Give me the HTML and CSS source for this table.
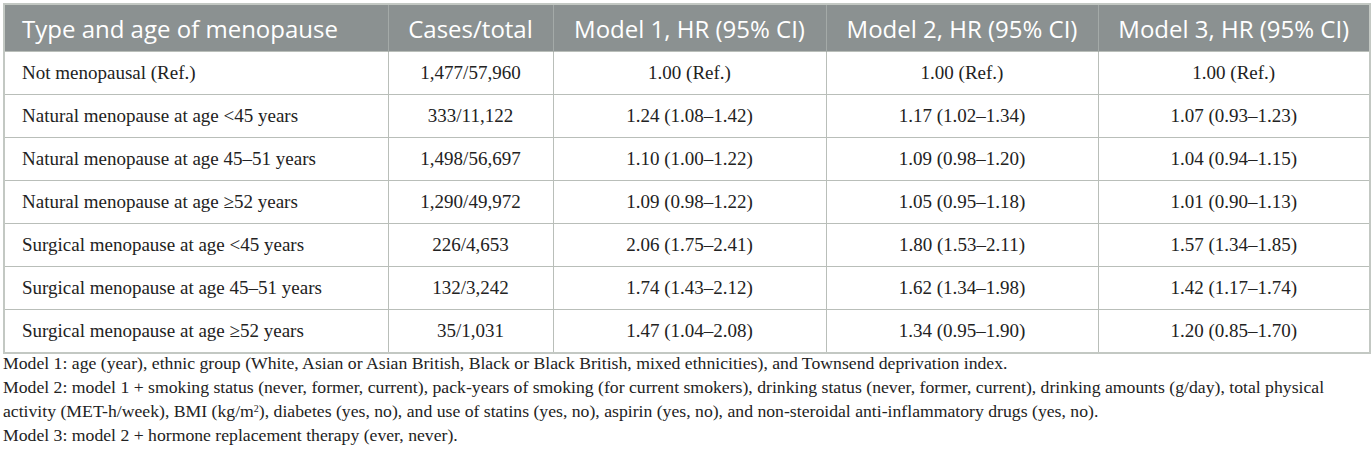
FILE: index.html
```html
<!DOCTYPE html>
<html lang="en">
<head>
  <meta charset="UTF-8" />
  <title>Menopause and risk table</title>
  <link rel="stylesheet" href="styles.css">
</head>
<body>

  <div class="wrap">
    <table class="results">
      <colgroup>
        <col class="c-type">
        <col class="c-cases">
        <col class="c-model1">
        <col class="c-model2">
        <col class="c-model3">
      </colgroup>
      <thead>
        <tr>
          <th class="first">Type and age of menopause</th>
          <th>Cases/total</th>
          <th>Model 1, HR (95% CI)</th>
          <th>Model 2, HR (95% CI)</th>
          <th>Model 3, HR (95% CI)</th>
        </tr>
      </thead>
      <tbody>
        <tr>
          <td class="first">Not menopausal (Ref.)</td>
          <td>1,477/57,960</td>
          <td>1.00 (Ref.)</td>
          <td>1.00 (Ref.)</td>
          <td>1.00 (Ref.)</td>
        </tr>
        <tr>
          <td class="first">Natural menopause at age &lt;45 years</td>
          <td>333/11,122</td>
          <td>1.24 (1.08–1.42)</td>
          <td>1.17 (1.02–1.34)</td>
          <td>1.07 (0.93–1.23)</td>
        </tr>
        <tr>
          <td class="first">Natural menopause at age 45–51 years</td>
          <td>1,498/56,697</td>
          <td>1.10 (1.00–1.22)</td>
          <td>1.09 (0.98–1.20)</td>
          <td>1.04 (0.94–1.15)</td>
        </tr>
        <tr>
          <td class="first">Natural menopause at age ≥52 years</td>
          <td>1,290/49,972</td>
          <td>1.09 (0.98–1.22)</td>
          <td>1.05 (0.95–1.18)</td>
          <td>1.01 (0.90–1.13)</td>
        </tr>
        <tr>
          <td class="first">Surgical menopause at age &lt;45 years</td>
          <td>226/4,653</td>
          <td>2.06 (1.75–2.41)</td>
          <td>1.80 (1.53–2.11)</td>
          <td>1.57 (1.34–1.85)</td>
        </tr>
        <tr>
          <td class="first">Surgical menopause at age 45–51 years</td>
          <td>132/3,242</td>
          <td>1.74 (1.43–2.12)</td>
          <td>1.62 (1.34–1.98)</td>
          <td>1.42 (1.17–1.74)</td>
        </tr>
        <tr>
          <td class="first">Surgical menopause at age ≥52 years</td>
          <td>35/1,031</td>
          <td>1.47 (1.04–2.08)</td>
          <td>1.34 (0.95–1.90)</td>
          <td>1.20 (0.85–1.70)</td>
        </tr>
      </tbody>
    </table>

    <!-- Footnotes -->
    <div class="notes">
      <p>Model 1: age (year), ethnic group (White, Asian or Asian British, Black or Black British, mixed ethnicities), and Townsend deprivation index.</p>
      <p>Model 2: model 1 + smoking status (never, former, current), pack-years of smoking (for current smokers), drinking status (never, former, current), drinking amounts (g/day), total physical activity (MET-h/week), BMI (kg/m<sup>2</sup>), diabetes (yes, no), and use of statins (yes, no), aspirin (yes, no), and non-steroidal anti-inflammatory drugs (yes, no).</p>
      <p>Model 3: model 2 + hormone replacement therapy (ever, never).</p>
    </div>
  </div>

</body>
</html>
```

FILE: styles.css
```css
body {
  margin: 0;
  background: #fff;
}
.wrap {
  padding: 3px 3px 0 3px;
}
.results {
  width: 1366px;
  border-collapse: collapse;
  border: 2px solid #c3c8c3;
  table-layout: fixed;
}
.c-type { width: 384px; }
.c-cases { width: 165px; }
.c-model1 { width: 273px; }
.c-model2 { width: 272px; }
.c-model3 { width: 272px; }

.results th {
  background: #8b9191;
  color: #fff;
  font-family: "Open Sans", sans-serif;
  font-weight: normal;
  font-size: 24px;
  height: 46px;
  padding: 0 10px;
  text-align: center;
  border-left: 1px solid #a4aaa8;
  white-space: nowrap;
}
.results td {
  font-family: "Liberation Serif", serif;
  font-size: 19px;
  color: #222;
  height: 42px;
  padding: 0 10px;
  text-align: center;
  border: 1px solid #b9beb9;
  white-space: nowrap;
}
.results .first {
  text-align: left;
  padding-left: 17px;
  border-left: none;
}

.notes {
  font-family: "Liberation Serif", serif;
  font-size: 17.7px;
  color: #222;
  line-height: 24px;
  margin-top: -3px;
}
.notes p {
  margin: 0;
}
.notes sup {
  font-size: 10px;
  line-height: 0;
  vertical-align: 5px;
}
```
